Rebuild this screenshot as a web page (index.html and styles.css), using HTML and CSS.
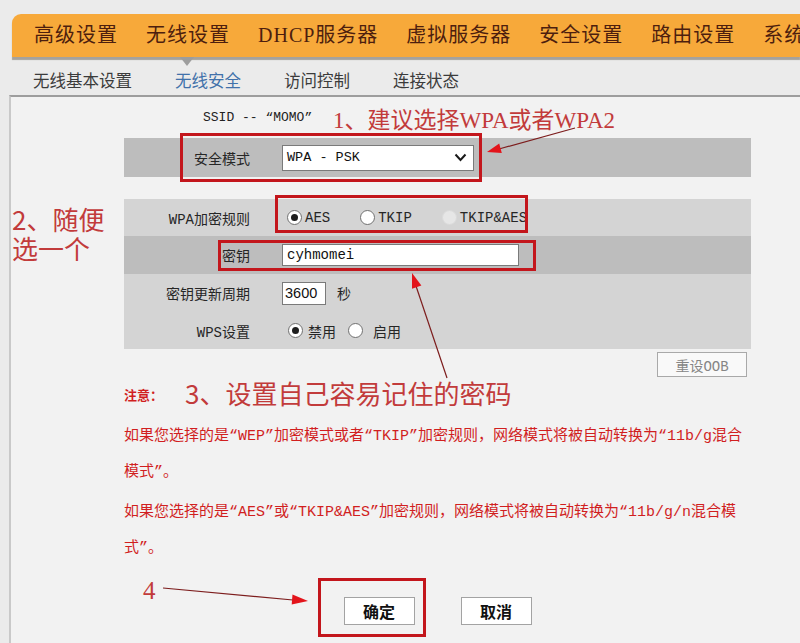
FILE: index.html
```html
<!doctype html>
<html lang="zh-CN">
    <head>
        <meta charset="utf-8">
        <title>无线安全设置</title>
        <link rel="stylesheet" href="styles.css">
    </head>
    <body>
        <header class="topbar">
            <nav class="main-nav">
                <a href="#">高级设置</a>
                <a href="#" class="current">无线设置</a>
                <a href="#">DHCP服务器</a>
                <a href="#">虚拟服务器</a>
                <a href="#">安全设置</a>
                <a href="#">路由设置</a>
                <a href="#">系统工具</a>
            </nav>
            <nav class="sub-nav">
                <a href="#">无线基本设置</a>
                <a href="#" class="current">无线安全</a>
                <a href="#">访问控制</a>
                <a href="#">连接状态</a>
            </nav>
        </header>

        <div id="panel">
            <div class="ssid">SSID -- “MOMO”</div>

            <div class="form">
                <div class="row dark tall">
                    <div class="label">安全模式</div>
                    <div class="field">
                        <div class="select">
                            <span>WPA - PSK</span>
                            <svg width="13" height="9" viewBox="0 0 13 9"><path d="M1.5 1.5 L6.5 7 L11.5 1.5" fill="none" stroke="#1a1a1a" stroke-width="2"/></svg>
                        </div>
                    </div>
                </div>

                <div class="group">
                    <div class="row light">
                        <div class="label">WPA加密规则</div>
                        <div class="field radios">
                            <label class="opt"><span class="radio on"></span>AES</label>
                            <label class="opt"><span class="radio"></span>TKIP</label>
                            <label class="opt"><span class="radio disabled"></span>TKIP&amp;AES</label>
                        </div>
                    </div>
                    <div class="row dark">
                        <div class="label">密钥</div>
                        <div class="field">
                            <div class="input key">cyhmomei</div>
                        </div>
                    </div>
                    <div class="row light">
                        <div class="label">密钥更新周期</div>
                        <div class="field">
                            <div class="input period">3600</div>
                            <span class="unit">秒</span>
                        </div>
                    </div>
                    <div class="row light">
                        <div class="label">WPS设置</div>
                        <div class="field radios wps">
                            <label class="opt"><span class="radio on"></span>禁用</label>
                            <label class="opt"><span class="radio"></span>启用</label>
                        </div>
                    </div>
                </div>

                <div class="oob-line">
                    <button class="oob">重设OOB</button>
                </div>

                <div class="notes">
                    <div class="note-title">注意：</div>
                    <p>如果您选择的是“WEP”加密模式或者“TKIP”加密规则，网络模式将被自动转换为“11b/g混合模式”。</p>
                    <p>如果您选择的是“AES”或“TKIP&amp;AES”加密规则，网络模式将被自动转换为“11b/g/n混合模式”。</p>
                </div>

                <div class="actions">
                    <button class="btn">确定</button>
                    <button class="btn">取消</button>
                </div>
            </div>
        </div>

        <!-- hand drawn notes on top of the screenshot -->
        <div class="mark box box-mode"></div>
        <div class="mark box box-rule"></div>
        <div class="mark box box-key"></div>
        <div class="mark box box-ok"></div>

        <div class="mark tip tip-1">1、建议选择WPA或者WPA2</div>
        <div class="mark tip tip-2">2、随便<br>选一个</div>
        <div class="mark tip tip-3">3、设置自己容易记住的密码</div>
        <div class="mark tip tip-4">4</div>

        <svg class="mark arrows" width="800" height="643" viewBox="0 0 800 643">
            <g stroke="#7d1d1d" stroke-width="1.2" fill="none">
                <line x1="575" y1="128" x2="499" y2="149"/>
                <line x1="447" y1="378" x2="416" y2="286"/>
                <line x1="163" y1="588" x2="293" y2="600"/>
            </g>
            <g fill="#e3141b">
                <polygon points="487,152 501.8,153.1 499.2,143.5"/>
                <polygon points="412,273 421.4,285.6 412,288.8"/>
                <polygon points="308,601 291.7,604.6 292.5,594.6"/>
            </g>
        </svg>
    </body>
</html>
```

FILE: styles.css
```css
* {
    box-sizing: border-box;
}

html {
    background: #ebebeb;
}

body {
    margin: 0;
    font-family: "Noto Sans CJK SC", sans-serif;
    color: #333;
    position: relative;
    min-height: 100vh;
    display: flex;
    flex-direction: column;
}

a {
    color: inherit;
    text-decoration: none;
}

/* top navigation */

.topbar {
    padding: 14px 0 0 12px;
    overflow: hidden;
}

.main-nav {
    display: flex;
    gap: 28px;
    height: 43px;
    padding-left: 22px;
    background: #f7a93a;
    border-radius: 9px 0 0 0;
    box-shadow: 0 3px 1px #a6a29c;
    white-space: nowrap;
    font-family: "Liberation Serif", "Noto Sans CJK SC", serif;
    font-size: 20px;
    letter-spacing: 1px;
    line-height: 43px;
    color: #4d1e0e;
}

.main-nav a {
    position: relative;
}

.main-nav a.current::after {
    content: "";
    position: absolute;
    left: 50%;
    top: 43px;
    margin-left: -8px;
    border-left: 7px solid transparent;
    border-right: 7px solid transparent;
    border-top: 9px solid #9d9d9d;
}

.sub-nav {
    display: flex;
    gap: 43px;
    height: 38px;
    padding: 8px 0 0 21px;
    font-size: 16.5px;
    line-height: 30px;
    color: #3b3b3b;
}

.sub-nav a.current {
    color: #4171aa;
}

/* main panel */

#panel {
    flex: 1;
    margin-left: 9px;
    padding-top: 11px;
    background: #f2f2f2;
    border-top: 2px solid #9d9d9d;
    border-left: 2px solid #c9c9c9;
}

.ssid {
    margin-left: 192px;
    height: 20px;
    line-height: 20px;
    font-family: "Liberation Mono", monospace;
    font-size: 13px;
    color: #222;
}

.form {
    width: 627px;
    margin: 10px 0 0 113px;
}

.row {
    display: flex;
    align-items: center;
    height: 38px;
    font-family: "Liberation Mono", "Noto Sans CJK SC", monospace;
    font-size: 14px;
    color: #262626;
}

.row.tall {
    height: 39px;
}

.row.dark {
    background: #bdbdbd;
}

.row.light {
    background: #d4d4d4;
}

.group {
    margin-top: 22px;
}

.group .row:first-child,
.group .row:last-child {
    height: 37px;
}

.label {
    width: 126px;
    text-align: right;
}

.field {
    margin-left: 32px;
    display: flex;
    align-items: center;
}

.select {
    width: 192px;
    height: 26px;
    padding: 0 6px 0 4px;
    display: flex;
    align-items: center;
    justify-content: space-between;
    background: #fff;
    border: 1px solid #7a7a7a;
    font-size: 13.5px;
    color: #111;
}

.input {
    height: 23px;
    padding-left: 4px;
    background: #fff;
    border: 1px solid #7a7a7a;
    line-height: 21px;
    color: #111;
}

.input.key {
    width: 237px;
    height: 22px;
    line-height: 20px;
}

.input.period {
    width: 44px;
    padding-left: 2px;
    font-family: "Liberation Sans", sans-serif;
    font-size: 14.5px;
}

.unit {
    margin-left: 11px;
}

.radios {
    padding-left: 5px;
}

.opt {
    display: flex;
    align-items: center;
    gap: 3px;
    margin-right: 30px;
}

.wps {
    padding-left: 6px;
}

.wps .opt {
    gap: 5px;
    margin-right: 12px;
}

.wps .opt:last-child {
    gap: 10px;
}

.radio {
    position: relative;
    width: 15px;
    height: 15px;
    border-radius: 50%;
    border: 1px solid #707070;
    background: #fff;
}

.radio.on::after {
    content: "";
    position: absolute;
    left: 3px;
    top: 3px;
    width: 7px;
    height: 7px;
    border-radius: 50%;
    background: #1e1e1e;
}

.radio.disabled {
    border-color: #dadada;
    background: #e6e6e6;
}

.oob-line {
    display: flex;
    justify-content: flex-end;
    margin-top: 3px;
    padding-right: 4px;
}

.oob {
    width: 90px;
    height: 25px;
    padding: 0;
    background: #f9f9f9;
    border: 1px solid #a9a9a9;
    font-family: "Liberation Mono", "Noto Sans CJK SC", monospace;
    font-size: 14px;
    color: #858585;
}

/* notes */

.notes {
    margin-top: 2px;
    font-family: "Liberation Mono", "Noto Sans CJK SC", monospace;
    font-size: 15px;
    line-height: 36px;
    color: #d11f1f;
}

.note-title {
    font-size: 13px;
    font-weight: bold;
}

.notes p {
    width: 624px;
    margin: 4px 0 0;
}

.actions {
    display: flex;
    justify-content: center;
    gap: 46px;
    margin-top: 30px;
}

.btn {
    width: 71px;
    height: 28px;
    padding: 0;
    background: #fff;
    border: 1px solid #a3a3a3;
    font-family: "Noto Sans CJK SC", sans-serif;
    font-size: 16px;
    font-weight: bold;
    color: #111;
}

/* annotations drawn over the page */

.mark {
    position: absolute;
    pointer-events: none;
}

.box {
    border: 3px solid #c3161c;
}

.box-mode {
    left: 180px;
    top: 133px;
    width: 302px;
    height: 49px;
}

.box-rule {
    left: 275px;
    top: 195px;
    width: 253px;
    height: 38px;
}

.box-key {
    left: 218px;
    top: 240px;
    width: 318px;
    height: 31px;
}

.box-ok {
    left: 318px;
    top: 578px;
    width: 108px;
    height: 59px;
}

.tip {
    color: #c23b3b;
    white-space: nowrap;
}

.tip-1 {
    left: 333px;
    top: 106px;
    font-family: "Liberation Serif", "Noto Sans CJK SC", serif;
    font-size: 23px;
    line-height: 30px;
}

.tip-2 {
    left: 12px;
    top: 204px;
    font-size: 26px;
    line-height: 29px;
}

.tip-3 {
    left: 185px;
    top: 377px;
    font-size: 26px;
    line-height: 32px;
}

.tip-4 {
    left: 143px;
    top: 576px;
    font-family: "Liberation Serif", serif;
    font-size: 25px;
    line-height: 30px;
}

.arrows {
    left: 0;
    top: 0;
}
```
